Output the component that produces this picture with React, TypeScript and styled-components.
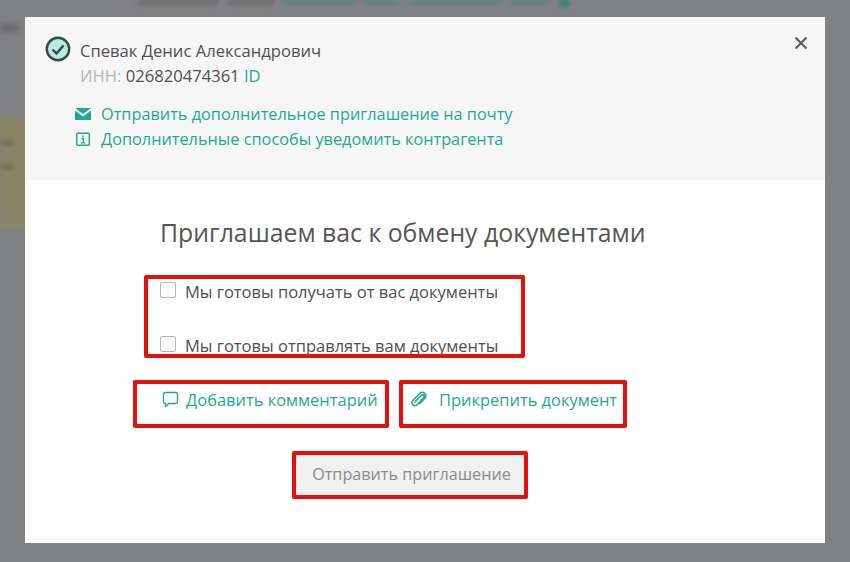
import React from 'react';
import styled, { createGlobalStyle } from 'styled-components';

const GREEN = '#1fa98f';
const RED = '#e60f0f';

const GlobalStyle = createGlobalStyle`
  html, body {
    margin: 0;
    padding: 0;
    background: #808183;
    font-family: 'Open Sans', 'Noto Sans', sans-serif;
  }
`;

const Page = styled.div`
  position: relative;
  width: 850px;
  height: 562px;
  overflow: hidden;
  background: #808183;
`;

const Backdrop = styled.div`
  display: flex;
  flex-direction: column;
  height: 100%;
  filter: blur(2px);
`;

const BlurredTop = styled.div`
  display: flex;
  gap: 10px;
  height: 8px;
  padding-left: 138px;
  align-items: flex-start;
`;

const BlurredBar = styled.div<{ $w: number; $color: string }>`
  width: ${(p) => p.$w}px;
  height: 5px;
  background: ${(p) => p.$color};
`;

const BlurredDot = styled.div`
  width: 11px;
  height: 8px;
  border-radius: 0 0 6px 6px;
  background: #3d8372;
`;

const Smudge = styled.div`
  width: 18px;
  height: 8px;
  margin-top: 16px;
  background: #6b6b6d;
`;

const YellowCard = styled.div`
  display: flex;
  flex-direction: column;
  gap: 18px;
  box-sizing: border-box;
  width: 30px;
  height: 110px;
  margin-top: 86px;
  padding-top: 22px;
  background: #8a8566;
`;

const CardLine = styled.div`
  width: 14px;
  height: 6px;
  background: #74705a;
`;

const Overlay = styled.div`
  position: absolute;
  inset: 0;
  display: flex;
  justify-content: center;
  padding-top: 17px;
`;

const Modal = styled.div`
  position: relative;
  width: 800px;
  height: 526px;
  background: #fff;
  display: flex;
  flex-direction: column;
`;

const CloseButton = styled.button`
  position: absolute;
  top: 18px;
  right: 16px;
  width: 16px;
  height: 16px;
  padding: 0;
  border: 0;
  background: none;
  display: flex;
`;

const TopPanel = styled.div`
  height: 163px;
  box-sizing: border-box;
  background: #f6f6f6;
  padding: 19px 20px 0 20px;
`;

const PersonRow = styled.div`
  display: flex;
  gap: 9px;
`;

const PersonInfo = styled.div`
  display: flex;
  flex-direction: column;
  margin-top: 2px;
  font-size: 16.6px;
  line-height: 25px;
  color: #505050;
`;

const InnLabel = styled.span`
  color: #b5b5b5;
`;

const IdLink = styled.span`
  color: ${GREEN};
`;

const LinkList = styled.div`
  display: flex;
  flex-direction: column;
  margin-top: 13px;
  padding-left: 30px;
`;

const InfoLink = styled.div`
  display: flex;
  align-items: center;
  gap: 10px;
  height: 25px;
  font-size: 16.3px;
  color: ${GREEN};
`;

const Body = styled.div`
  display: flex;
  flex-direction: column;
  flex: 1;
`;

const Title = styled.h2`
  margin: 36px 0 0 135px;
  font-size: 24.8px;
  line-height: 32px;
  font-weight: 400;
  color: #555;
`;

const CheckGroup = styled.div`
  box-sizing: border-box;
  width: 381px;
  height: 83px;
  margin: 27px 0 0 119px;
  border: 4px solid ${RED};
  border-radius: 2px;
  overflow: hidden;
  padding-left: 12px;
  display: flex;
  flex-direction: column;
  gap: 29px;
`;

const CheckRow = styled.label`
  display: flex;
  align-items: center;
  gap: 9px;
  height: 25px;
  flex: none;
  font-size: 16.5px;
  color: #505050;
`;

const CheckBox = styled.span`
  box-sizing: border-box;
  width: 16px;
  height: 16px;
  margin-top: -3px;
  border: 1px solid #b4b4b4;
  border-radius: 2px;
  background: #fff;
`;

const ActionRow = styled.div`
  display: flex;
  gap: 10px;
  margin: 22px 0 0 108px;
`;

const ActionBox = styled.div<{ $w: number; $pad: number; $gap: number }>`
  box-sizing: border-box;
  width: ${(p) => p.$w}px;
  height: 48px;
  padding: 0 0 10px ${(p) => p.$pad}px;
  border: 4px solid ${RED};
  border-radius: 2px;
  display: flex;
  align-items: center;
  gap: ${(p) => p.$gap}px;
  font-size: 16.45px;
  color: ${GREEN};
  white-space: nowrap;
`;

const SubmitFrame = styled.div`
  box-sizing: border-box;
  width: 236px;
  height: 48px;
  margin: 23px 0 0 267px;
  padding: 0 0 3px 3px;
  border: 4px solid ${RED};
  border-radius: 2px;
  background: #f1f1f1;
  display: flex;
  align-items: center;
  justify-content: center;
  font-size: 16.2px;
  color: #8a8a8a;
`;

export default function App() {
  return (
    <Page>
      <GlobalStyle />
      <Backdrop>
        <BlurredTop>
          <BlurredBar $w={80} $color="#6f6f70" />
          <BlurredBar $w={46} $color="#6f6f70" />
          <BlurredBar $w={71} $color="#5f827a" />
          <BlurredBar $w={34} $color="#5f827a" />
          <BlurredBar $w={92} $color="#5f827a" />
          <BlurredBar $w={38} $color="#5f827a" />
          <BlurredDot />
        </BlurredTop>
        <Smudge />
        <YellowCard>
          <CardLine />
          <CardLine />
        </YellowCard>
      </Backdrop>
      <Overlay>
        <Modal>
          <CloseButton aria-label="Закрыть">
            <svg width="16" height="16" viewBox="0 0 16 16">
              <path d="M2.5 2.5l11 11M13.5 2.5l-11 11" stroke="#5f5f5f" strokeWidth="2.2" fill="none" />
            </svg>
          </CloseButton>
          <TopPanel>
            <PersonRow>
              <svg width="26" height="26" viewBox="0 0 26 26" style={{ flex: 'none' }}>
                <circle cx="13" cy="13" r="11.2" fill="#b5ecdf" stroke="#36474a" strokeWidth="2.4" />
                <path d="M7.5 13.5l4 4 7-8" fill="none" stroke="#36474a" strokeWidth="2.4" />
              </svg>
              <PersonInfo>
                <span>Спевак Денис Александрович</span>
                <span>
                  <InnLabel>ИНН:</InnLabel> 026820474361 <IdLink>ID</IdLink>
                </span>
              </PersonInfo>
            </PersonRow>
            <LinkList>
              <InfoLink>
                <svg width="16" height="12" viewBox="0 0 16 12">
                  <path d="M0 0h16L8 6z" fill={GREEN} />
                  <path d="M0 2.4l8 6 8-6V12H0z" fill={GREEN} />
                </svg>
                Отправить дополнительное приглашение на почту
              </InfoLink>
              <InfoLink>
                <svg width="16" height="16" viewBox="0 0 16 16">
                  <rect x="1.7" y="2.2" width="12.6" height="12" rx="1" fill="none" stroke={GREEN} strokeWidth="1.5" />
                  <path d="M8 4.6v1.8M6.4 7.6H8.4v4M6.3 11.7h3.6" fill="none" stroke={GREEN} strokeWidth="1.4" />
                </svg>
                Дополнительные способы уведомить контрагента
              </InfoLink>
            </LinkList>
          </TopPanel>
          <Body>
            <Title>Приглашаем вас к обмену документами</Title>
            <CheckGroup>
              <CheckRow>
                <CheckBox />
                Мы готовы получать от вас документы
              </CheckRow>
              <CheckRow>
                <CheckBox />
                Мы готовы отправлять вам документы
              </CheckRow>
            </CheckGroup>
            <ActionRow>
              <ActionBox $w={256} $pad={25} $gap={7}>
                <svg width="17" height="17" viewBox="0 0 17 17">
                  <path d="M3.5 1.5h10a2 2 0 0 1 2 2v7a2 2 0 0 1-2 2H7l-3.5 3v-3a2 2 0 0 1-2-2v-7a2 2 0 0 1 2-2z" fill="none" stroke={GREEN} strokeWidth="1.4" />
                </svg>
                Добавить комментарий
              </ActionBox>
              <ActionBox $w={228} $pad={7} $gap={11}>
                <svg width="18" height="16" viewBox="0 0 18 16">
                  <path d="M4.5 11.5l6.8-7.2a1.7 1.7 0 0 1 2.6 2.3L7.4 13.6a3 3 0 0 1-4.5-4L9.6 2.4a3.6 3.6 0 0 1 5.5 4.6l-5.6 6" fill="none" stroke={GREEN} strokeWidth="1.5" />
                </svg>
                Прикрепить документ
              </ActionBox>
            </ActionRow>
            <SubmitFrame>Отправить приглашение</SubmitFrame>
          </Body>
        </Modal>
      </Overlay>
    </Page>
  );
}
